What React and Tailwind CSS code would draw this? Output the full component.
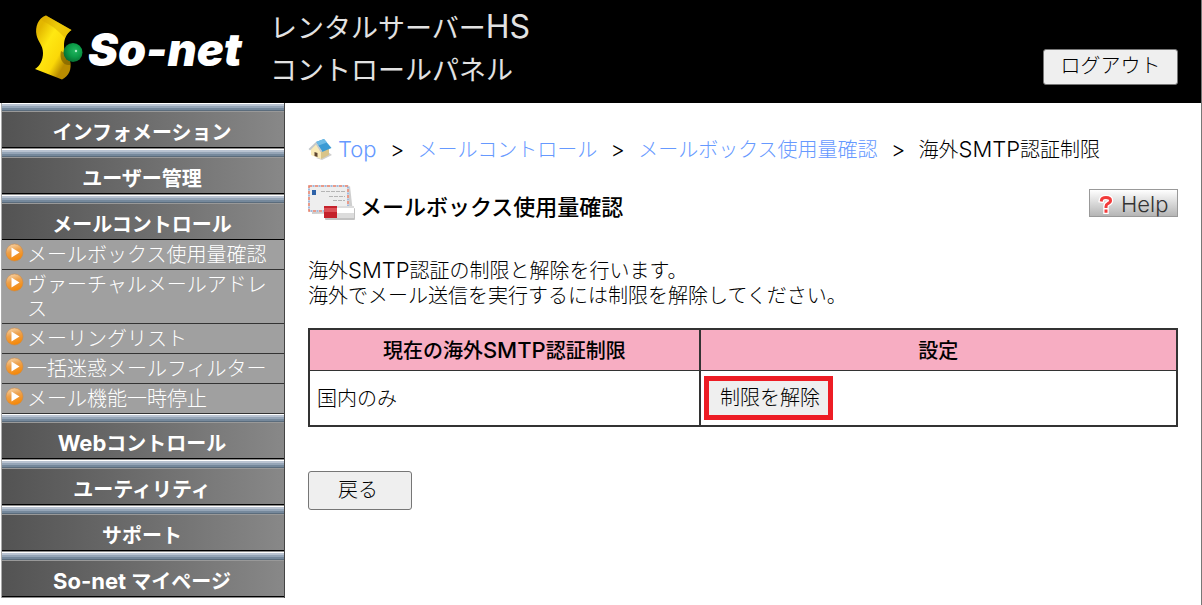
import React from 'react';

const menuBefore = ['インフォメーション', 'ユーザー管理', 'メールコントロール'];

const mailItems = [
    'メールボックス使用量確認',
    'ヴァーチャルメールアドレス',
    'メーリングリスト',
    '一括迷惑メールフィルター',
    'メール機能一時停止',
];

// Latin letters run a little larger than the kana around them
const Latin = ({ children }) => (
    <span className="font-['Inter','Noto_Sans_CJK_JP',sans-serif] text-[22px] leading-none">{children}</span>
);

const LogoMark = () => (
    <svg className="shrink-0" width="50" height="66" viewBox="0 0 50 66" aria-hidden="true">
        <defs>
            <linearGradient id="ribbon" gradientUnits="userSpaceOnUse" x1="2" y1="20" x2="36" y2="40">
                <stop offset="0" stopColor="#e3b700" />
                <stop offset="0.35" stopColor="#ffe812" />
                <stop offset="0.75" stopColor="#fbd808" />
                <stop offset="1" stopColor="#b98c00" />
            </linearGradient>
            <radialGradient id="ball" cx="0.6" cy="0.4" r="0.65">
                <stop offset="0" stopColor="#22b560" />
                <stop offset="0.5" stopColor="#0c9c48" />
                <stop offset="1" stopColor="#066a30" />
            </radialGradient>
        </defs>
        <path d="M12 0.5 C4 3 1 12 2.5 20 C4 27 9 30 9 38 C9 45 6 51 1 54 L28 64.5 C35 61 38 54 36 46 C35 41 30 38 30 31 C30 24 32 19 37.5 15 Z" fill="url(#ribbon)" />
        <path d="M12 0.5 L37.5 15 C34 17.5 32 20 31 23 C24 15 16 9 7 5 C8.500 2.500 10 1 12 0.5 Z" fill="#d8a900" opacity="0.45" />
        <path d="M27 36 C25 44 29 51 36 50 C37 47 35 43 33 40 Z" fill="#7c6200" opacity="0.7" />
        <circle cx="39" cy="37.500" r="9.500" fill="url(#ball)" />
        <circle cx="42" cy="36" r="1.200" fill="#a9efc6" />
    </svg>
);

const ArrowBullet = () => (
    <svg className="shrink-0" width="19" height="20" viewBox="0 0 19 20" aria-hidden="true">
        <defs>
            <linearGradient id="bullet" x1="0" y1="0" x2="0.3" y2="1">
                <stop offset="0" stopColor="#f7dcb8" />
                <stop offset="0.5" stopColor="#eda04a" />
                <stop offset="1" stopColor="#f58a0c" />
            </linearGradient>
        </defs>
        <circle cx="9.5" cy="10.5" r="8.5" fill="url(#bullet)" stroke="#cf8a45" strokeWidth="0.6" />
        <path d="M6.5 5.5 L14.5 10.5 L6.5 15.5 Z" fill="#fff" />
    </svg>
);

const HouseIcon = () => (
    <svg className="shrink-0" width="24" height="22" viewBox="0 0 24 22" aria-hidden="true">
        <path d="M8 20 L14 22 L24 17 L20 14 Z" fill="#cfcfcf" />
        <path d="M3 11 L8 5 L13 12 L13 21 L3 17 Z" fill="#f9eab8" />
        <path d="M13 12 L21 10 L21 17 L13 21 Z" fill="#d9c48a" />
        <path d="M8 4 L16 1 L23.500 10 L14 14 Z" fill="#3a9ad4" />
        <path d="M8 4 L16 1 L19 4.500 L10.500 7.500 Z" fill="#6dbbe6" />
        <path d="M8 4 L0.5 11 L2 12.500 L8 6.500 L12.500 14 L14.500 13.500 Z" fill="#c3c8cc" />
        <path d="M6.500 14 L9.500 15 L9.500 19 L6.500 18 Z" fill="#5e4632" />
    </svg>
);

const MailIcon = () => (
    <svg className="shrink-0" width="48" height="36" viewBox="0 0 48 36" aria-hidden="true">
        <path d="M42 1 L45 28 L4 29 V26 Z" fill="#cfcfcf" />
        <rect x="0" y="0" width="41" height="27" fill="#eeeeee" />
        <rect x="1" y="1" width="39" height="25" fill="none" stroke="#e8806a" strokeWidth="1.500" strokeDasharray="3 3" />
        <rect x="1" y="1" width="39" height="25" fill="none" stroke="#88a8d6" strokeWidth="1.500" strokeDasharray="2 4" strokeDashoffset="-3.500" />
        <rect x="4" y="5" width="4" height="5" fill="#2e62a8" />
        <path d="M13 6.500 H37 M21 11.500 H37 M25 15.500 H37" stroke="#b5b5b5" strokeWidth="1" strokeDasharray="4 1" />
        <rect x="17" y="23" width="30" height="12" rx="1" fill="#c2c2c2" />
        <rect x="16" y="21" width="13" height="12" fill="#c5212b" />
        <rect x="16" y="23" width="13" height="4" fill="#dc5057" />
        <rect x="29" y="21" width="17" height="12" fill="#dcdcdc" />
        <rect x="29" y="23" width="17" height="5" fill="#fff" />
    </svg>
);

const QuestionIcon = () => (
    <svg className="shrink-0" width="18" height="20" viewBox="0 0 18 20" aria-hidden="true">
        <g fill="none" strokeLinecap="square">
            <path d="M4.5 6 Q5 3.5 9 3.5 Q13.5 3.5 13.5 6.5 Q13.5 8.5 11 9.5 Q9 10.5 9 12.5 M9 17 V17.2" stroke="#fff" strokeWidth="5.5" />
            <path d="M4.5 6 Q5 3.5 9 3.5 Q13.5 3.5 13.5 6.5 Q13.5 8.5 11 9.5 Q9 10.5 9 12.5 M9 17 V17.2" stroke="#f23b3b" strokeWidth="3" />
        </g>
    </svg>
);

const MenuHeading = ({ children }) => (
    <a href="#" className="block border-b border-[#8c8c8c] text-white">
        <span className="block h-[9px] border-t border-white bg-[linear-gradient(#b9c3d1_0_25%,#95a5b7_25%_50%,#75889b_50%_75%,#5b6c7c_75%_88%,#999_88%)]"></span>
        <span className="flex h-9 items-center justify-center border-b border-black bg-linear-to-r from-[#535353] to-[#888] pt-1 pr-0.5 text-xl leading-6 font-bold">
            <span>{children}</span>
        </span>
    </a>
);

const Separator = () => <span className="w-[41px] text-center"><Latin>&gt;</Latin></span>;

export default function App() {
    return (
        <div className="min-h-screen border-r border-[#777] bg-white font-['Noto_Sans_CJK_JP',sans-serif] text-xl font-light text-black">
            <header className="flex h-[103px] items-center bg-black pr-[23px] pb-2 pl-[34px]">
                <LogoMark />
                <span className="ml-1 w-[182px] shrink-0 pt-1 font-['Inter',sans-serif] text-[45px] leading-none font-black text-white italic">So-net</span>
                <h1 className="text-[27px] leading-[42px] font-normal text-[#e2e2e2]">
                    レンタルサーバー<span className="font-['Inter',sans-serif] text-[32px] leading-none">HS</span>
                    <br />
                    コントロールパネル
                </h1>
                <button className="mt-[38px] ml-auto h-9 w-[135px] rounded-[3px] border border-[#767676] bg-[#efefef] pb-1 leading-6">ログアウト</button>
            </header>

            <div className="flex">
                <nav className="ml-px w-[284px] shrink-0 self-start border-r border-l border-[#444] border-l-[#aaa]">
                    {menuBefore.map((label) => (
                        <MenuHeading key={label}>{label}</MenuHeading>
                    ))}
                    <ul className="-mt-px bg-[#a0a0a0] text-white">
                        {mailItems.map((label) => (
                            <li key={label} className="border-b border-[#333]">
                                <a href="#" className="flex gap-[3px] pt-0.5 pr-3 pb-[3px] pl-[3px] leading-6">
                                    <ArrowBullet />
                                    <span>{label}</span>
                                </a>
                            </li>
                        ))}
                    </ul>
                    <MenuHeading><Latin>Web</Latin>コントロール</MenuHeading>
                    <MenuHeading>ユーティリティ</MenuHeading>
                    <MenuHeading>サポート</MenuHeading>
                    <MenuHeading><Latin>So-net </Latin>マイページ</MenuHeading>
                </nav>

                <main className="min-w-0 flex-1 pt-8 pr-[23px] pl-[23px]">
                    <div className="flex h-7 items-center whitespace-nowrap">
                        <HouseIcon />
                        <a href="#" className="ml-1.5 text-[#6699ff]"><Latin>Top</Latin></a>
                        <Separator />
                        <a href="#" className="text-[#6699ff]">メールコントロール</a>
                        <Separator />
                        <a href="#" className="text-[#6699ff]">メールボックス使用量確認</a>
                        <Separator />
                        <span>海外<Latin>SMTP</Latin>認証制限</span>
                    </div>

                    <div className="mt-[22px] flex items-start">
                        <MailIcon />
                        <h2 className="mt-1 ml-1 text-[22px] leading-8 font-medium">メールボックス使用量確認</h2>
                        <button className="mt-1 ml-auto flex h-7 w-[89px] items-center gap-1.5 border border-[#999] bg-linear-to-b from-white to-[#b5b5b5] pt-0.5 pl-[7px] text-[#333]">
                            <QuestionIcon />
                            <Latin>Help</Latin>
                        </button>
                    </div>

                    <p className="mt-9 leading-[25px]">
                        海外<Latin>SMTP</Latin>認証の制限と解除を行います。
                        <br />
                        海外でメール送信を実行するには制限を解除してください。
                    </p>

                    <table className="mt-[21px] w-full table-fixed border-collapse border-2 border-[#333]">
                        <thead>
                            <tr className="h-[41px] bg-[#f7adc2]">
                                <th className="w-[45%] border-r-2 border-b border-[#333] leading-6 font-medium">現在の海外<Latin>SMTP</Latin>認証制限</th>
                                <th className="border-b border-[#333] leading-6 font-medium">設定</th>
                            </tr>
                        </thead>
                        <tbody>
                            <tr className="h-14">
                                <td className="border-r-2 border-[#333] px-[7px] leading-6">国内のみ</td>
                                <td className="px-[3px]">
                                    <button className="block h-11 w-[129px] border-5 border-[#ed1c24] bg-[#efefef] pb-0.5 pl-1 leading-6 whitespace-nowrap">制限を解除</button>
                                </td>
                            </tr>
                        </tbody>
                    </table>

                    <button className="mt-11 h-[39px] w-[104px] rounded-[3px] border border-[#767676] bg-[#efefef] pr-1 pb-1 leading-6">戻る</button>
                </main>
            </div>
        </div>
    );
}
